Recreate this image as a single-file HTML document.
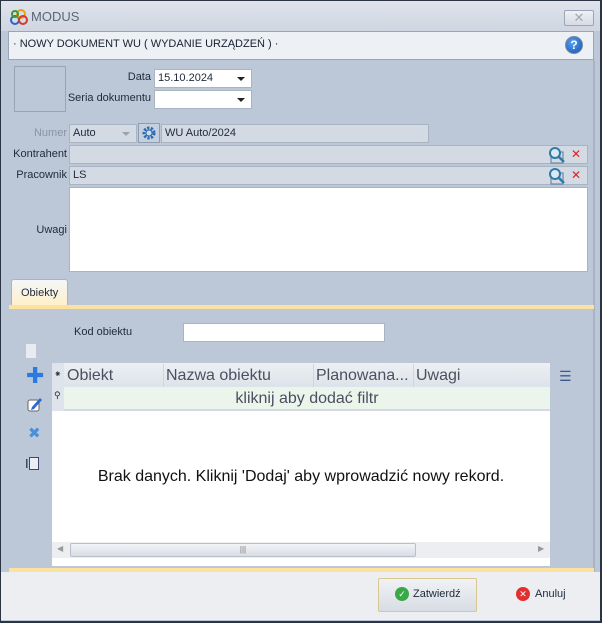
<!DOCTYPE html>
<html><head><meta charset="utf-8"><style>
*{box-sizing:border-box;margin:0;padding:0}
body{width:602px;height:623px;overflow:hidden;font-family:"Liberation Sans","DejaVu Sans",sans-serif;font-size:11px;color:#1e2a3a;background:#2b3442;position:relative}
.a{position:absolute}
.win{left:1px;top:1px;width:599px;height:620px;background:#bcc8d8}
.inp{position:absolute;background:#fff;border:1px solid #a9b4c3;height:19px;padding:2px 3px;font-size:11px}
.dis{background:#d3dae4;border:1px solid #a9b4c3}
.lbl{position:absolute;font-size:11px;text-align:right}
.arr{position:absolute;right:6px;top:7px;width:0;height:0;border-left:4px solid transparent;border-right:4px solid transparent;border-top:4px solid #222}
</style></head><body>
<div class="a win"></div>
<!-- title bar -->
<div class="a" style="left:1px;top:1px;width:599px;height:30px;background:linear-gradient(#dfe4ec,#cfd6e1)"></div>
<svg class="a" style="left:9px;top:8px" width="20" height="18" viewBox="0 0 20 18"><circle cx="6" cy="12" r="4" fill="none" stroke="#2a63c8" stroke-width="2"/><circle cx="12" cy="6" r="4" fill="none" stroke="#e8a020" stroke-width="2"/><circle cx="14" cy="12" r="4" fill="none" stroke="#d23a2a" stroke-width="2"/><circle cx="6" cy="6" r="3" fill="none" stroke="#3a9a3a" stroke-width="2"/></svg>
<div class="a" style="left:31px;top:9px;font-size:13px;color:#5a6677">MODUS</div>
<div class="a" style="left:564px;top:10px;width:30px;height:16px;border:1px solid #9aa6b6;border-radius:2px;background:linear-gradient(#eef1f5,#d6dce5);text-align:center;color:#a0a8b4;font-size:13px;line-height:13px;font-weight:bold">✕</div>
<!-- header -->
<div class="a" style="left:8px;top:31px;width:586px;height:29px;background:#edf0f4;border:1px solid #9aa6b8"></div>
<div class="a" style="left:13px;top:38px;font-size:11px;color:#1a2030">· NOWY DOKUMENT WU ( WYDANIE URZĄDZEŃ ) ·</div>
<div class="a" style="left:565px;top:36px;width:18px;height:18px;border-radius:50%;background:radial-gradient(circle at 40% 35%,#5aa0f0,#1050b0);border:1px solid #7a8aa0;color:#fff;font-weight:bold;font-size:12px;text-align:center;line-height:16px">?</div>
<div class="a" style="left:593px;top:60px;width:2px;height:512px;background:#a8b4c4"></div>
<!-- photo box -->
<div class="a" style="left:14px;top:66px;width:52px;height:46px;border:1px solid #98a4b4"></div>
<div class="lbl" style="left:80px;top:71px;width:71px">Data</div>
<div class="inp" style="left:154px;top:69px;width:98px">15.10.2024<div class="arr"></div></div>
<div class="lbl" style="left:60px;top:92px;width:91px">Seria dokumentu</div>
<div class="inp" style="left:154px;top:90px;width:98px"><div class="arr"></div></div>
<div class="lbl" style="left:20px;top:127px;width:47px;color:#8a94a3">Numer</div>
<div class="inp dis" style="left:69px;top:124px;width:68px">Auto<div class="arr" style="border-top-color:#9aa3ae"></div></div>
<div class="a" style="left:138px;top:123px;width:22px;height:20px;border:1px solid #8e9bb0;background:#c5d0de"></div>
<svg class="a" style="left:141px;top:125px" width="16" height="16" viewBox="0 0 16 16"><circle cx="8" cy="8" r="5" fill="none" stroke="#2a6ab0" stroke-width="3" stroke-dasharray="2.2 1.4"/><circle cx="8" cy="8" r="3" fill="#d0dcea" stroke="#2a6ab0"/></svg>
<div class="inp dis" style="left:161px;top:124px;width:268px">WU Auto/2024</div>
<div class="lbl" style="left:6px;top:148px;width:61px">Kontrahent</div>
<div class="inp dis" style="left:69px;top:145px;width:519px;height:19px"></div>
<div class="lbl" style="left:6px;top:169px;width:61px">Pracownik</div>
<div class="inp dis" style="left:69px;top:166px;width:519px;height:19px">LS</div>
<svg class="a" style="left:548px;top:146px" width="18" height="18" viewBox="0 0 18 18"><rect x="3" y="6" width="12" height="11" fill="none" stroke="#5a7a98"/><circle cx="7" cy="7" r="5" fill="#dde8f0" stroke="#2e7aa8" stroke-width="2"/><path d="M10.5 10.5L16 16" stroke="#2e7aa8" stroke-width="2.5"/></svg>
<svg class="a" style="left:548px;top:167px" width="18" height="18" viewBox="0 0 18 18"><rect x="3" y="6" width="12" height="11" fill="none" stroke="#5a7a98"/><circle cx="7" cy="7" r="5" fill="#dde8f0" stroke="#2e7aa8" stroke-width="2"/><path d="M10.5 10.5L16 16" stroke="#2e7aa8" stroke-width="2.5"/></svg>
<div class="a" style="left:571px;top:147px;color:#e02020;font-weight:bold;font-size:12px">✕</div>
<div class="a" style="left:571px;top:168px;color:#e02020;font-weight:bold;font-size:12px">✕</div>
<div class="lbl" style="left:6px;top:224px;width:61px">Uwagi</div>
<div class="inp" style="left:69px;top:187px;width:519px;height:85px"></div>
<!-- tab -->
<div class="a" style="left:11px;top:279px;width:57px;height:27px;background:linear-gradient(#f4f6f9,#fff0c8);border:1px solid #a8b4c4;border-bottom:none;border-radius:3px 3px 0 0;padding:7px 0 0 9px">Obiekty</div>
<div class="a" style="left:9px;top:305px;width:585px;height:4px;background:#fbe2a0"></div>
<div class="a" style="left:9px;top:568px;width:585px;height:4px;background:#fbe2a0"></div>
<div class="lbl" style="left:60px;top:326px;width:71px;text-align:left;left:74px">Kod obiektu</div>
<div class="inp" style="left:183px;top:323px;width:202px;height:19px"></div>
<div class="a" style="left:26px;top:344px;width:10px;height:14px;background:#e8ecf1"></div>
<div class="a" style="left:26px;top:366px;color:#2a7ae0;font-size:22px;font-weight:bold;line-height:20px">✚</div>
<svg class="a" style="left:27px;top:396px" width="16" height="16" viewBox="0 0 16 16"><rect x="1" y="4" width="11" height="11" rx="2" fill="#fff" stroke="#666"/><path d="M5 11L13 2l2 2-8 9-3 1z" fill="#2a6ad0"/></svg>
<div class="a" style="left:28px;top:424px;color:#4a90d8;font-size:15px;font-weight:bold">✖</div>
<div class="a" style="left:25px;top:456px;font-size:13px">I<span style="display:inline-block;width:10px;height:13px;border:1px solid #446;background:#e8eef8;vertical-align:-2px"></span></div>
<!-- grid -->
<div class="a" style="left:52px;top:363px;width:498px;height:203px;background:#fff"></div>
<div class="a" style="left:52px;top:363px;width:498px;height:24px;background:linear-gradient(#edf0f4,#dde3ea);font-size:16px;color:#4a5060"></div>
<div class="a" style="left:52px;top:363px;width:12px;height:48px;background:#dfe4ec;font-size:9px;padding:6px 0 0 2px">⁕<br><br>⚲</div>
<div class="a" style="left:67px;top:367px;font-size:16px;color:#4a5060">Obiekt</div>
<div class="a" style="left:163px;top:364px;width:1px;height:23px;background:#d0d6de"></div>
<div class="a" style="left:166px;top:367px;font-size:16px;color:#4a5060">Nazwa obiektu</div>
<div class="a" style="left:313px;top:364px;width:1px;height:23px;background:#d0d6de"></div>
<div class="a" style="left:316px;top:367px;font-size:16px;color:#4a5060">Planowana...</div>
<div class="a" style="left:413px;top:364px;width:1px;height:23px;background:#d0d6de"></div>
<div class="a" style="left:416px;top:367px;font-size:16px;color:#4a5060">Uwagi</div>
<div class="a" style="left:64px;top:387px;width:486px;height:24px;background:#ebf5eb;border-bottom:2px solid #d4dae2;text-align:center;font-size:16px;color:#4a5060;padding-top:3px">kliknij aby dodać filtr</div>
<div class="a" style="left:52px;top:468px;width:498px;text-align:center;font-size:16px;color:#111">Brak danych. Kliknij 'Dodaj' aby wprowadzić nowy rekord.</div>
<div class="a" style="left:52px;top:542px;width:498px;height:16px;background:#eceef1"></div>
<div class="a" style="left:70px;top:543px;width:346px;height:14px;background:linear-gradient(#f2f4f7,#d8dde4);border:1px solid #b8c0cc;border-radius:2px;text-align:center;font-size:8px;color:#777;line-height:12px">|||</div>
<div class="a" style="left:57px;top:544px;font-size:8px;color:#999">◀</div>
<div class="a" style="left:538px;top:544px;font-size:8px;color:#999">▶</div>
<div class="a" style="left:559px;top:368px;font-size:14px;color:#3a5a8a">☰</div>
<!-- footer -->
<div class="a" style="left:1px;top:572px;width:599px;height:48px;background:#eceef2"></div>
<div class="a" style="left:378px;top:578px;width:99px;height:34px;border:1px solid #d8c890;border-radius:2px;background:linear-gradient(#f0f2f5,#d8dde5)"></div>
<div class="a" style="left:395px;top:587px;width:14px;height:14px;border-radius:50%;background:#3aa848;color:#fff;font-size:9px;text-align:center;line-height:14px">✓</div>
<div class="a" style="left:413px;top:588px">Zatwierdź</div>
<div class="a" style="left:516px;top:587px;width:14px;height:14px;border-radius:50%;background:#e03030;color:#fff;font-size:9px;text-align:center;line-height:14px;font-weight:bold">✕</div>
<div class="a" style="left:535px;top:588px">Anuluj</div>
</body></html>
